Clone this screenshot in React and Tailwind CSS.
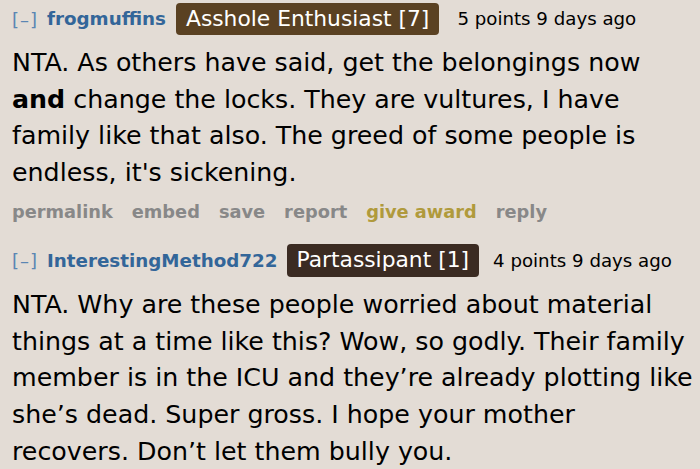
export default function App() {
  const font = { fontFamily: '"DejaVu Sans", Verdana, sans-serif' };
  return (
    <div className="w-[700px] h-[469px] bg-[#e3dcd5] overflow-hidden text-black" style={font}>
      <div className="pl-[12px] pt-[3px]">
        <div className="flex items-center h-[32px]">
          <span className="w-[26px] text-[18px] text-[#5b86b3] tracking-[1px] whitespace-nowrap">[–]</span>
          <span className="ml-[9px] text-[18.3px] font-bold text-[#336699]">frogmuffins</span>
          <span className="ml-[10px] h-[32px] px-[10px] flex items-center rounded-[4px] bg-[#5a4122] text-white text-[21.8px]">Asshole Enthusiast [7]</span>
          <span className="ml-[18px] text-[18.2px]">5 points 9 days ago</span>
        </div>
        <p className="mt-[10px] text-[25.3px] leading-[36.7px]">
          NTA. As others have said, get the belongings now<br />
          <b>and</b> change the locks. They are vultures, I have<br />
          family like that also. The greed of some people is<br />
          endless, it's sickening.
        </p>
        <div className="mt-[10px] h-[22px] flex items-center gap-[19px] text-[17.8px] font-bold text-[#888888]">
          <span>permalink</span>
          <span>embed</span>
          <span>save</span>
          <span>report</span>
          <span className="text-[#b09a3c]">give award</span>
          <span>reply</span>
        </div>
        <div className="mt-[20px] flex items-center h-[33px]">
          <span className="w-[26px] text-[18px] text-[#5b86b3] tracking-[1px] whitespace-nowrap">[–]</span>
          <span className="ml-[9px] text-[18.3px] font-bold text-[#336699]">InterestingMethod722</span>
          <span className="ml-[9px] h-[33px] px-[10px] flex items-center rounded-[4px] bg-[#3b2b22] text-white text-[21.8px]">Partassipant [1]</span>
          <span className="ml-[14px] text-[18.2px]">4 points 9 days ago</span>
        </div>
        <p className="mt-[10px] text-[25.3px] leading-[36.7px]">
          NTA. Why are these people worried about material<br />
          things at a time like this? Wow, so godly. Their family<br />
          member is in the ICU and they’re already plotting like<br />
          she’s dead. Super gross. I hope your mother<br />
          recovers. Don’t let them bully you.
        </p>
      </div>
    </div>
  );
}
